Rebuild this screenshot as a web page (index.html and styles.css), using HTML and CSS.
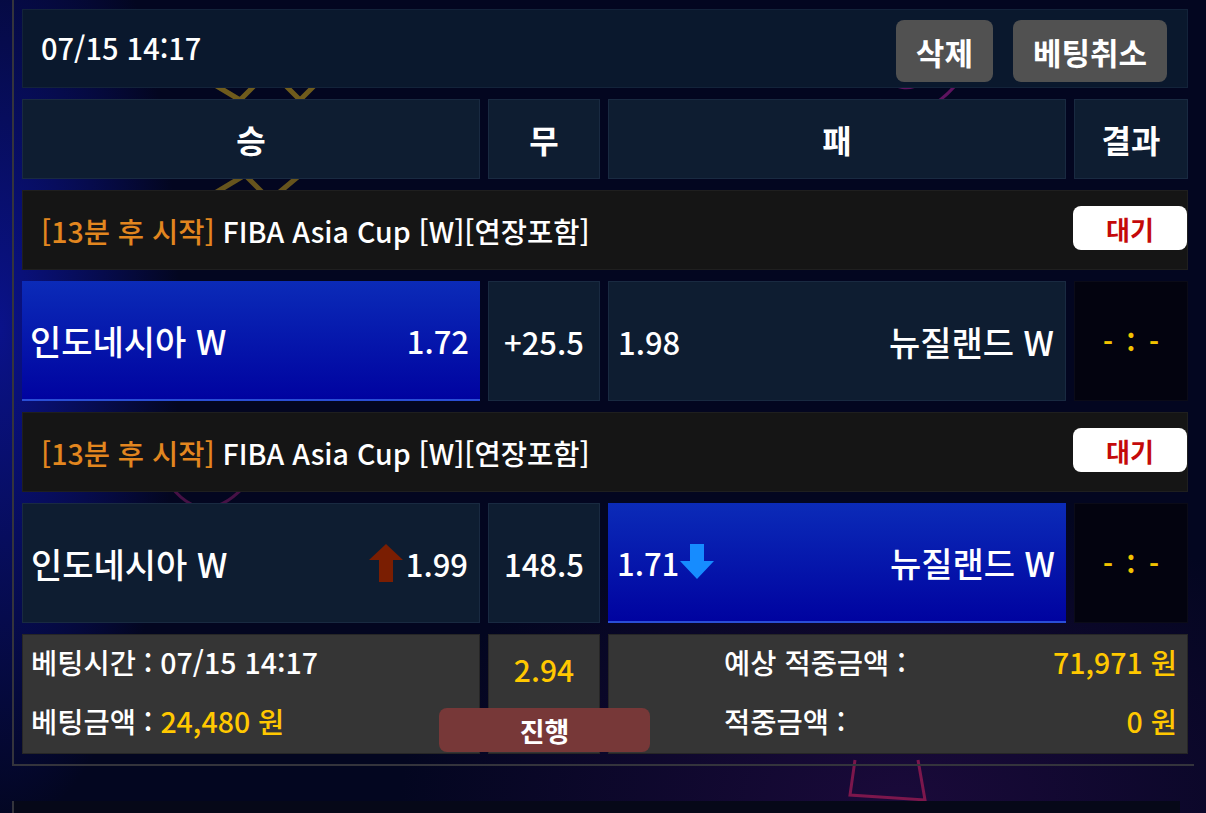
FILE: index.html
```html
<!DOCTYPE html>
<html lang="ko">

<head>
    <meta charset="utf-8">
    <title>베팅내역</title>
    <link rel="stylesheet" href="styles.css">
</head>

<body>
    <svg class="backdrop" width="1206" height="813" viewBox="0 0 1206 813">
        <path d="M190 70 L240 100 L270 70 L300 100 L330 70" fill="none" stroke="#c9a21a" stroke-width="5" opacity="0.55"/>
        <path d="M195 205 L245 175 L270 200 L300 175" fill="none" stroke="#c9a21a" stroke-width="5" opacity="0.5"/>
        <path d="M870 60 Q900 110 940 70 M880 100 Q920 130 960 80" fill="none" stroke="#9b1c8a" stroke-width="3" opacity="0.6"/>
        <path d="M855 760 L850 795 L925 800 L918 760" fill="none" stroke="#c0205a" stroke-width="3" opacity="0.6"/>
        <path d="M160 470 Q200 540 250 480" fill="none" stroke="#8a1c6a" stroke-width="3" opacity="0.5"/>
    </svg>

    <div class="slip">
        <div class="slip-head">
            <span class="slip-date">07/15 14:17</span>
            <div class="head-buttons">
                <button class="grey-btn">삭제</button>
                <button class="grey-btn">베팅취소</button>
            </div>
        </div>

        <div class="row col-head">
            <div class="cell">승</div>
            <div class="cell">무</div>
            <div class="cell">패</div>
            <div class="cell">결과</div>
        </div>

        <div class="game-title">
            <span><span class="start-in">[13분 후 시작]</span> FIBA Asia Cup [W][연장포함]</span>
            <span class="state">대기</span>
        </div>

        <div class="row odds">
            <div class="cell home picked">
                <span class="team">인도네시아 W</span>
                <span>1.72</span>
            </div>
            <div class="cell mid">+25.5</div>
            <div class="cell away">
                <span>1.98</span>
                <span class="team">뉴질랜드 W</span>
            </div>
            <div class="cell score">- : -</div>
        </div>

        <div class="game-title">
            <span><span class="start-in">[13분 후 시작]</span> FIBA Asia Cup [W][연장포함]</span>
            <span class="state">대기</span>
        </div>

        <div class="row odds">
            <div class="cell home">
                <span class="team">인도네시아 W</span>
                <span class="rate">
                    <svg class="arrow up" width="36" height="38" viewBox="0 0 36 38">
                        <path d="M18 0 L35 16 L25 16 L25 38 L11 38 L11 16 L1 16 Z" fill="#7a1e02"/>
                    </svg>1.99</span>
            </div>
            <div class="cell mid">148.5</div>
            <div class="cell away picked">
                <span class="rate">1.71<svg class="arrow" width="36" height="36" viewBox="0 0 36 36">
                        <path d="M11 0 L25 0 L25 17 L35 17 L18 35 L1 17 L11 17 Z" fill="#168cff"/>
                    </svg></span>
                <span class="team">뉴질랜드 W</span>
            </div>
            <div class="cell score">- : -</div>
        </div>

        <div class="row summary">
            <div class="cell info">
                <div>베팅시간 : 07/15 14:17</div>
                <div>베팅금액 : <span class="gold">24,480 원</span></div>
            </div>
            <div class="cell total">
                <span class="gold">2.94</span>
                <span class="progress">진행</span>
            </div>
            <div class="cell payout">
                <span>예상 적중금액 :</span>
                <span class="gold">71,971 원</span>
                <span>적중금액 :</span>
                <span class="gold">0 원</span>
            </div>
        </div>
    </div>

    <div class="slip next"></div>
</body>

</html>
```

FILE: styles.css
```css
body {
    margin: 0;
    height: 813px;
    overflow: hidden;
    font-family: "Noto Sans CJK KR", "Noto Sans", sans-serif;
    font-weight: 500;
    color: #fff;
    background:
        radial-gradient(ellipse 180px 500px at 0 330px, #0a128a 0%, rgba(10, 18, 138, 0) 100%),
        radial-gradient(ellipse 500px 300px at 900px 800px, #1a0a3a 0%, rgba(26, 10, 58, 0) 100%),
        #030620;
    position: relative;
}

.backdrop {
    position: absolute;
    left: 0;
    top: 0;
}

.slip {
    position: relative;
    width: 1166px;
    margin-left: 12px;
    padding: 9px 6px 10px 8px;
    border-left: 2px solid #34343c;
    border-bottom: 2px solid #34343c;
    display: flex;
    flex-direction: column;
    gap: 11px;
}

.slip.next {
    margin-top: 35px;
    height: 40px;
    padding: 0;
    border-bottom: none;
    background: #060818;
}

.slip-head {
    height: 77px;
    background: #0a182d;
    border: 1px solid #13233a;
    display: flex;
    align-items: center;
    justify-content: space-between;
    padding: 0 20px 0 18px;
}

.slip-date {
    font-size: 29px;
    margin-bottom: 4px;
}

.head-buttons {
    display: flex;
    gap: 20px;
    margin-top: 5px;
}

.grey-btn {
    height: 62px;
    padding: 0 20px;
    background: #515151;
    color: #fff;
    border: none;
    border-radius: 8px;
    font-family: inherit;
    font-size: 31px;
    font-weight: bold;
}

.row {
    display: grid;
    grid-template-columns: 458px 112px 458px 114px;
    column-gap: 8px;
}

.cell {
    box-sizing: border-box;
    background: #0e1d31;
    border: 1px solid #192a41;
    display: flex;
    align-items: center;
}

.col-head .cell {
    height: 80px;
    justify-content: center;
    font-size: 32px;
    font-weight: bold;
}

.game-title {
    box-sizing: border-box;
    height: 80px;
    background: #151515;
    border: 1px solid #1f1f1f;
    display: flex;
    align-items: center;
    justify-content: space-between;
    padding-left: 18px;
    font-size: 28.5px;
}

.start-in {
    color: #e2861f;
}

.state {
    width: 114px;
    height: 44px;
    margin-bottom: 4px;
    background: #fff;
    border-radius: 8px;
    color: #c40a0a;
    font-size: 26px;
    font-weight: bold;
    display: flex;
    align-items: center;
    justify-content: center;
}

.odds .cell {
    height: 120px;
    font-size: 31px;
}

.odds .team {
    font-size: 34px;
}

.odds .home,
.odds .away {
    justify-content: space-between;
}

.odds .home {
    padding: 0 11px 0 8px;
}

.odds .away {
    padding: 0 11px 0 9px;
}

.odds .picked {
    background: linear-gradient(#0b2bb8, #0003a0);
    border: none;
    border-bottom: 2px solid #2a4ed6;
}

.odds .mid {
    justify-content: center;
}

.odds .score {
    background: #03030f;
    border-color: #0b0b18;
    justify-content: center;
    color: #f2c200;
    font-size: 27px;
    font-weight: bold;
    word-spacing: 6px;
}

.rate {
    display: flex;
    align-items: center;
}

.arrow {
    display: block;
}

.arrow.up {
    margin-right: 2px;
}

.summary .cell {
    height: 120px;
    background: #353535;
    border-color: #262626;
    font-size: 28.5px;
}

.gold {
    color: #ffc800;
}

.summary .info {
    flex-direction: column;
    align-items: flex-start;
    justify-content: center;
    gap: 18px;
    padding: 0 0 6px 8px;
}

.summary .total {
    position: relative;
    align-items: flex-start;
    justify-content: center;
    padding-top: 12px;
    font-size: 30px;
}

.progress {
    position: absolute;
    left: -50px;
    bottom: 1px;
    width: 211px;
    height: 44px;
    background: #773838;
    border-radius: 8px;
    color: #fff;
    font-size: 27px;
    font-weight: bold;
    display: flex;
    align-items: center;
    justify-content: center;
}

.summary .payout {
    grid-column: 3 / 5;
    display: grid;
    grid-template-columns: auto auto;
    justify-content: space-between;
    align-content: center;
    row-gap: 18px;
    padding: 0 10px 6px 115px;
}

.summary .payout .gold {
    text-align: right;
}
```
